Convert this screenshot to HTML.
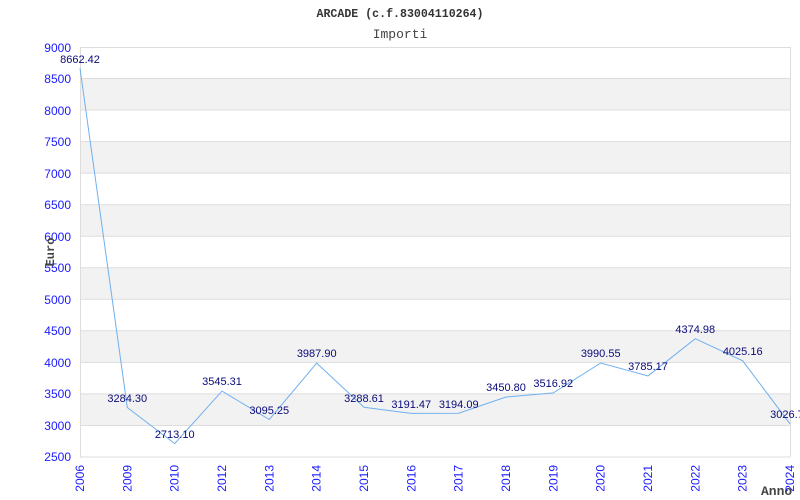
<!DOCTYPE html>
<html><head><meta charset="utf-8"><style>
html,body{margin:0;padding:0;background:#fff;width:800px;height:500px;overflow:hidden}
svg{display:block}
.yl{font:12px "Liberation Sans",sans-serif;fill:#1a1aff;text-anchor:end}
.xl{font:12px "Liberation Sans",sans-serif;fill:#1a1aff;text-anchor:end}
.dl{font:11px "Liberation Sans",sans-serif;fill:#0a0a7a;text-anchor:middle}
</style></head><body>
<svg width="800" height="500" xmlns="http://www.w3.org/2000/svg">
<text x="400" y="17" text-anchor="middle" style="font:bold 11.6px 'Liberation Mono',monospace;fill:#333">ARCADE (c.f.83004110264)</text>
<text x="400" y="38" text-anchor="middle" style="font:13px 'Liberation Mono',monospace;fill:#444">Importi</text>
<g fill="#f2f2f2">
<rect x="80" y="78.5" width="710" height="31.5"/>
<rect x="80" y="141.6" width="710" height="31.5"/>
<rect x="80" y="204.7" width="710" height="31.5"/>
<rect x="80" y="267.8" width="710" height="31.5"/>
<rect x="80" y="330.8" width="710" height="31.5"/>
<rect x="80" y="393.9" width="710" height="31.5"/>
</g>
<g stroke="#ddd" stroke-width="1">
<line x1="80" y1="47.5" x2="790" y2="47.5"/>
<line x1="80" y1="78.5" x2="790" y2="78.5"/>
<line x1="80" y1="110" x2="790" y2="110"/>
<line x1="80" y1="141.6" x2="790" y2="141.6"/>
<line x1="80" y1="173.1" x2="790" y2="173.1"/>
<line x1="80" y1="204.7" x2="790" y2="204.7"/>
<line x1="80" y1="236.2" x2="790" y2="236.2"/>
<line x1="80" y1="267.8" x2="790" y2="267.8"/>
<line x1="80" y1="299.3" x2="790" y2="299.3"/>
<line x1="80" y1="330.8" x2="790" y2="330.8"/>
<line x1="80" y1="362.4" x2="790" y2="362.4"/>
<line x1="80" y1="393.9" x2="790" y2="393.9"/>
<line x1="80" y1="425.5" x2="790" y2="425.5"/>
<line x1="80" y1="457" x2="790" y2="457"/>
<line x1="80.5" y1="47" x2="80.5" y2="457"/>
<line x1="790.5" y1="47" x2="790.5" y2="457"/>
</g>
<g>
<text class="yl" x="71" y="52">9000</text>
<text class="yl" x="71" y="83">8500</text>
<text class="yl" x="71" y="115">8000</text>
<text class="yl" x="71" y="146">7500</text>
<text class="yl" x="71" y="178">7000</text>
<text class="yl" x="71" y="209">6500</text>
<text class="yl" x="71" y="241">6000</text>
<text class="yl" x="71" y="272">5500</text>
<text class="yl" x="71" y="304">5000</text>
<text class="yl" x="71" y="335">4500</text>
<text class="yl" x="71" y="367">4000</text>
<text class="yl" x="71" y="398">3500</text>
<text class="yl" x="71" y="430">3000</text>
<text class="yl" x="71" y="461">2500</text>
</g>
<text transform="translate(54,252) rotate(-90)" text-anchor="middle" style="font:bold 12px 'Liberation Mono',monospace;fill:#444">Euro</text>
<text x="761" y="495" style="font:bold 13px 'Liberation Mono',monospace;fill:#444">Anno</text>
<g>
<text class="xl" transform="translate(84,465) rotate(-90)">2006</text>
<text class="xl" transform="translate(131.3,465) rotate(-90)">2009</text>
<text class="xl" transform="translate(178.7,465) rotate(-90)">2010</text>
<text class="xl" transform="translate(226,465) rotate(-90)">2012</text>
<text class="xl" transform="translate(273.3,465) rotate(-90)">2013</text>
<text class="xl" transform="translate(320.7,465) rotate(-90)">2014</text>
<text class="xl" transform="translate(368,465) rotate(-90)">2015</text>
<text class="xl" transform="translate(415.3,465) rotate(-90)">2016</text>
<text class="xl" transform="translate(462.7,465) rotate(-90)">2017</text>
<text class="xl" transform="translate(510,465) rotate(-90)">2018</text>
<text class="xl" transform="translate(557.3,465) rotate(-90)">2019</text>
<text class="xl" transform="translate(604.7,465) rotate(-90)">2020</text>
<text class="xl" transform="translate(652,465) rotate(-90)">2021</text>
<text class="xl" transform="translate(699.3,465) rotate(-90)">2022</text>
<text class="xl" transform="translate(746.7,465) rotate(-90)">2023</text>
<text class="xl" transform="translate(794,465) rotate(-90)">2024</text>
</g>
<polyline fill="none" stroke="#6fb0ee" stroke-width="1" points="80,68.3 127.3,407.5 174.7,443.6 222,391.1 269.3,419.5 316.7,363.1 364,407.3 411.3,413.4 458.7,413.2 506,397 553.3,392.9 600.7,363 648,375.9 695.3,338.7 742.7,360.8 790,423.8"/>
<g>
<text class="dl" x="80" y="63">8662.42</text>
<text class="dl" x="127.3" y="402">3284.30</text>
<text class="dl" x="174.7" y="438">2713.10</text>
<text class="dl" x="222" y="385">3545.31</text>
<text class="dl" x="269.3" y="414">3095.25</text>
<text class="dl" x="316.7" y="357">3987.90</text>
<text class="dl" x="364" y="402">3288.61</text>
<text class="dl" x="411.3" y="408">3191.47</text>
<text class="dl" x="458.7" y="408">3194.09</text>
<text class="dl" x="506" y="391">3450.80</text>
<text class="dl" x="553.3" y="387">3516.92</text>
<text class="dl" x="600.7" y="357">3990.55</text>
<text class="dl" x="648" y="370">3785.17</text>
<text class="dl" x="695.3" y="333">4374.98</text>
<text class="dl" x="742.7" y="355">4025.16</text>
<text class="dl" x="790" y="418">3026.73</text>
</g>
</svg>
</body></html>
